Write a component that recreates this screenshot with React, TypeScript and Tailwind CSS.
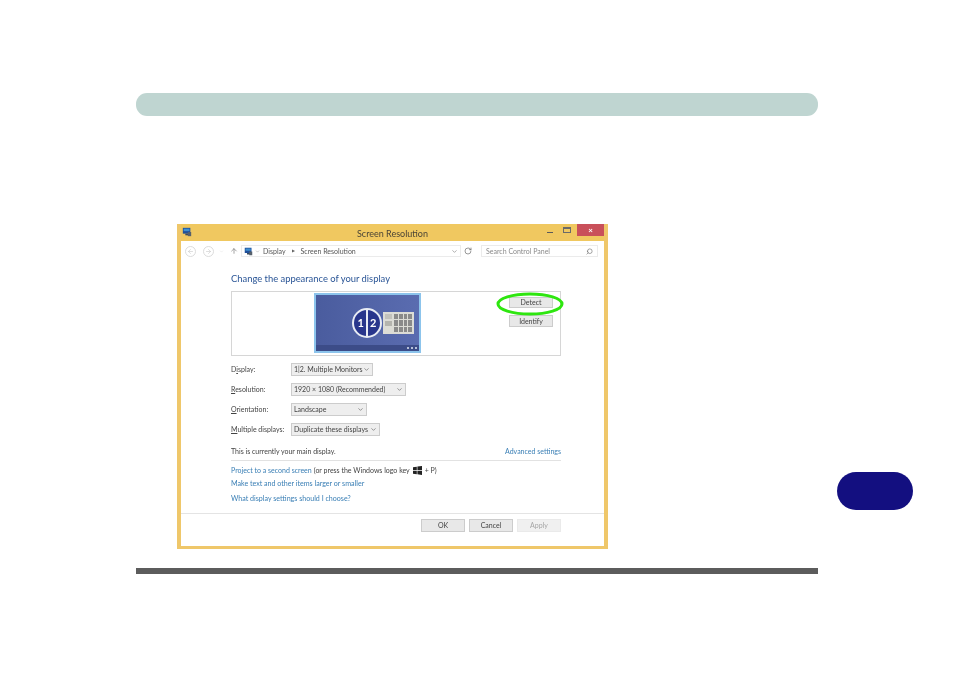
import { ArrowLeft, ArrowRight, ArrowUp, ChevronDown, RotateCw, Search } from "lucide-react";

const selects = [
  { key: "i", pre: "D", post: "splay:", value: "1|2. Multiple Monitors", width: "w-[82px]" },
  { key: "R", pre: "", post: "esolution:", value: "1920 × 1080 (Recommended)", width: "w-[115px]" },
  { key: "O", pre: "", post: "rientation:", value: "Landscape", width: "w-[76px]" },
  { key: "M", pre: "", post: "ultiple displays:", value: "Duplicate these displays", width: "w-[89px]" },
];

function MonitorIcon({ size }: { size: number }) {
  return (
    <svg width={size} height={size} viewBox="0 0 12 12" className="shrink-0">
      <rect x="1" y="1" width="9" height="7" fill="#1f4f9a" />
      <rect x="2" y="2" width="7" height="3" fill="#3f8fd0" />
      <rect x="4" y="8" width="4" height="2" fill="#3c4a5c" />
      <rect x="7" y="6" width="4" height="5" fill="#56606c" />
    </svg>
  );
}

function DialogButton({ children, disabled }: { children: React.ReactNode; disabled?: boolean }) {
  return (
    <div
      className={`flex h-[13px] w-[44px] items-center justify-center border text-[7px] ${
        disabled ? "border-[#eaeaea] bg-[#f0f0f0] text-[#a5a5a5]" : "border-[#cccccc] bg-[#e8e8e8] text-[#444]"
      }`}
    >
      {children}
    </div>
  );
}

export default function App() {
  return (
    <div className="relative h-[673px] w-[954px] overflow-hidden bg-white font-['Lato',sans-serif]">
      <div className="flex pt-[93px] pl-[136px]">
        <div className="w-[682px]">
          <div className="h-[23px] rounded-[11px] bg-[#bfd5d1]" />

          <div className="mt-[108px] ml-[41px] flex h-[325px] w-[431px] flex-col border-x-[4px] border-b-[3px] border-[#efc76a] bg-[#f0c860] blur-[0.3px]">
            <div className="relative flex h-[17px] shrink-0 items-center justify-center pt-[2px] text-[9px] text-[#4a4436]">
              <div className="absolute top-[3px] left-[1px]">
                <MonitorIcon size={10} />
              </div>
              Screen Resolution
              <div className="absolute top-0 right-0 flex h-[12px] items-center">
                <div className="mr-[10px] mt-[5px] h-px w-[6px] bg-[#5a5a5a]" />
                <div className="mr-[6px] h-[6px] w-[8px] border border-[#6a6a6a] border-t-2" />
                <div className="flex h-[12px] w-[27px] items-center justify-center bg-[#c9505a] text-[8px] font-bold leading-none text-white">×</div>
              </div>
            </div>

            <div className="relative flex min-h-0 flex-1 flex-col bg-white">
              <div className="mt-[4px] flex h-[12px] shrink-0 items-center pl-[4px] pr-[6px] text-[#666]">
                <div className="flex h-[11px] w-[11px] items-center justify-center rounded-full border border-[#dcdcdc]">
                  <ArrowLeft size={7} className="text-[#c8c8c8]" />
                </div>
                <div className="ml-[7px] flex h-[11px] w-[11px] items-center justify-center rounded-full border border-[#dcdcdc]">
                  <ArrowRight size={7} className="text-[#c8c8c8]" />
                </div>
                <ChevronDown size={5} className="ml-[5px] text-[#ddd]" />
                <ArrowUp size={8} className="ml-[6px] text-[#777]" />
                <div className="ml-[3px] flex h-[12px] w-[220px] items-center border border-[#ebebeb] pl-[2px] text-[7px] text-[#555]">
                  <MonitorIcon size={9} />
                  <ChevronDown size={5} className="ml-[2px] text-[#888]" />
                  <span className="ml-[3px]">Display</span>
                  <span className="mx-[6px] text-[4px] text-[#666]">▶</span>
                  <span>Screen Resolution</span>
                  <ChevronDown size={7} className="ml-auto mr-[2px] text-[#777]" />
                </div>
                <RotateCw size={8} className="ml-[3px] text-[#666]" />
                <div className="ml-[9px] flex h-[12px] w-[117px] items-center justify-between border border-[#ebebeb] px-[4px] text-[7px] text-[#8a8a8a]">
                  <span>Search Control Panel</span>
                  <Search size={7} className="-scale-x-100 text-[#666]" />
                </div>
              </div>

              <div className="flex min-h-0 flex-1 flex-col pl-[50px] pr-[43px]">
                <div className="mt-[15px] h-[13px] text-[9.4px] leading-[13px] text-[#2a5596]">Change the appearance of your display</div>

                <div className="relative mt-[6px] flex h-[65px] shrink-0 border border-[#d6d6d6]">
                  <div className="relative mt-[1px] ml-[82px] flex h-[60px] w-[107px] items-center justify-end border-2 border-[#8cc4ec] bg-gradient-to-r from-[#4a5c9e] to-[#5a6cb0] pr-[5px]">
                    <div className="flex items-center">
                      <div className="flex h-[30px] w-[30px] items-center justify-center rounded-full border-2 border-[#e8ecf4] bg-[#28368c] text-[11px] font-bold text-white">
                        <span>1</span>
                        <span className="mx-[2px] h-full w-[2px] bg-[#e8ecf4]" />
                        <span>2</span>
                      </div>
                      <div className="ml-[1px] flex h-[22px] w-[31px] gap-[2px] bg-[#dcdcd6] p-[2px]">
                        <div className="flex w-[7px] flex-col gap-[2px]">
                          <div className="h-[5px] bg-[#c2c2bc]" />
                          <div className="h-[5px] bg-[#b4b4ae]" />
                        </div>
                        <div className="grid flex-1 grid-cols-4 gap-[1px]">
                          {Array.from({ length: 12 }).map((_, i) => (
                            <div key={i} className="bg-[#8a8a8a]" />
                          ))}
                        </div>
                      </div>
                    </div>
                    <div className="absolute right-0 bottom-0 left-0 flex h-[6px] items-center justify-end gap-[2px] bg-[#3c4c88] pr-[2px]">
                      <div className="h-[2px] w-[2px] rounded-full bg-[#dfe6f2]" />
                      <div className="h-[2px] w-[2px] rounded-full bg-[#dfe6f2]" />
                      <div className="h-[2px] w-[2px] rounded-full bg-[#dfe6f2]" />
                    </div>
                  </div>
                  <div className="mt-[5px] ml-[88px] flex flex-col gap-[7px]">
                    <div className="flex h-[11px] w-[44px] items-center justify-center border border-[#cccccc] bg-[#e8e8e8] text-[7px] text-[#444]">Detect</div>
                    <div className="flex h-[12px] w-[44px] items-center justify-center border border-[#cccccc] bg-[#e8e8e8] text-[7px] text-[#444]">Identify</div>
                  </div>
                  <svg width="68" height="24" viewBox="0 0 68 24" className="absolute top-0 left-[264px]">
                    <ellipse cx="34" cy="12" rx="32" ry="10" fill="none" stroke="#2ee60f" strokeWidth="3" />
                  </svg>
                </div>

                <div className="mt-[7px] flex flex-col gap-[7px]">
                  {selects.map((s) => (
                    <div key={s.key} className="flex h-[13px] items-center text-[7px] text-[#444]">
                      <span className="w-[60px] shrink-0">
                        {s.pre}
                        <span className="underline">{s.key}</span>
                        {s.post}
                      </span>
                      <div className={`flex h-[13px] ${s.width} items-center justify-between border border-[#cccccc] bg-[#eeeeee] pl-[2px] pr-[2px] whitespace-nowrap`}>
                        <span>{s.value}</span>
                        <ChevronDown size={7} className="shrink-0 text-[#555]" />
                      </div>
                    </div>
                  ))}
                </div>

                <div className="mt-[10px] flex h-[15px] shrink-0 items-center justify-between border-b border-[#e2e2e2] pb-[3px] text-[7px]">
                  <span className="text-[#444]">This is currently your main display.</span>
                  <span className="text-[#3a7fb5]">Advanced settings</span>
                </div>

                <div className="mt-[4px] flex h-[10px] items-center text-[7px] text-[#444]">
                  <span className="text-[#3a7fb5]">Project to a second screen</span>
                  <span className="ml-[2px]">(or press the Windows logo key</span>
                  <svg width="9" height="9" viewBox="0 0 9 9" className="ml-[3px]">
                    <path d="M0 1.3 3.8.7v3.4H0zM4.4.6 9 0v4.1H4.4zM0 4.8h3.8v3.4L0 7.7zM4.4 4.8H9V9l-4.6-.7z" fill="#222" />
                  </svg>
                  <span className="ml-[3px]">+ P)</span>
                </div>
                <div className="mt-[4px] h-[10px] text-[7.1px] leading-[10px] text-[#3a7fb5]">Make text and other items larger or smaller</div>
                <div className="mt-[5px] h-[10px] text-[7.1px] leading-[10px] text-[#3a7fb5]">What display settings should I choose?</div>
              </div>

              <div className="mt-[10px] flex h-[33px] shrink-0 justify-end gap-[4px] border-t border-[#e4e4e4] pt-[5px] pr-[43px]">
                <DialogButton>OK</DialogButton>
                <DialogButton>Cancel</DialogButton>
                <DialogButton disabled>Apply</DialogButton>
              </div>
            </div>
          </div>

          <div className="mt-[19px] h-[6px] bg-[#5c5c5c]" />
        </div>

        <div className="mt-[379px] ml-[19px] h-[38px] w-[76px] rounded-[19px] bg-[#130f80]" />
      </div>
    </div>
  );
}
